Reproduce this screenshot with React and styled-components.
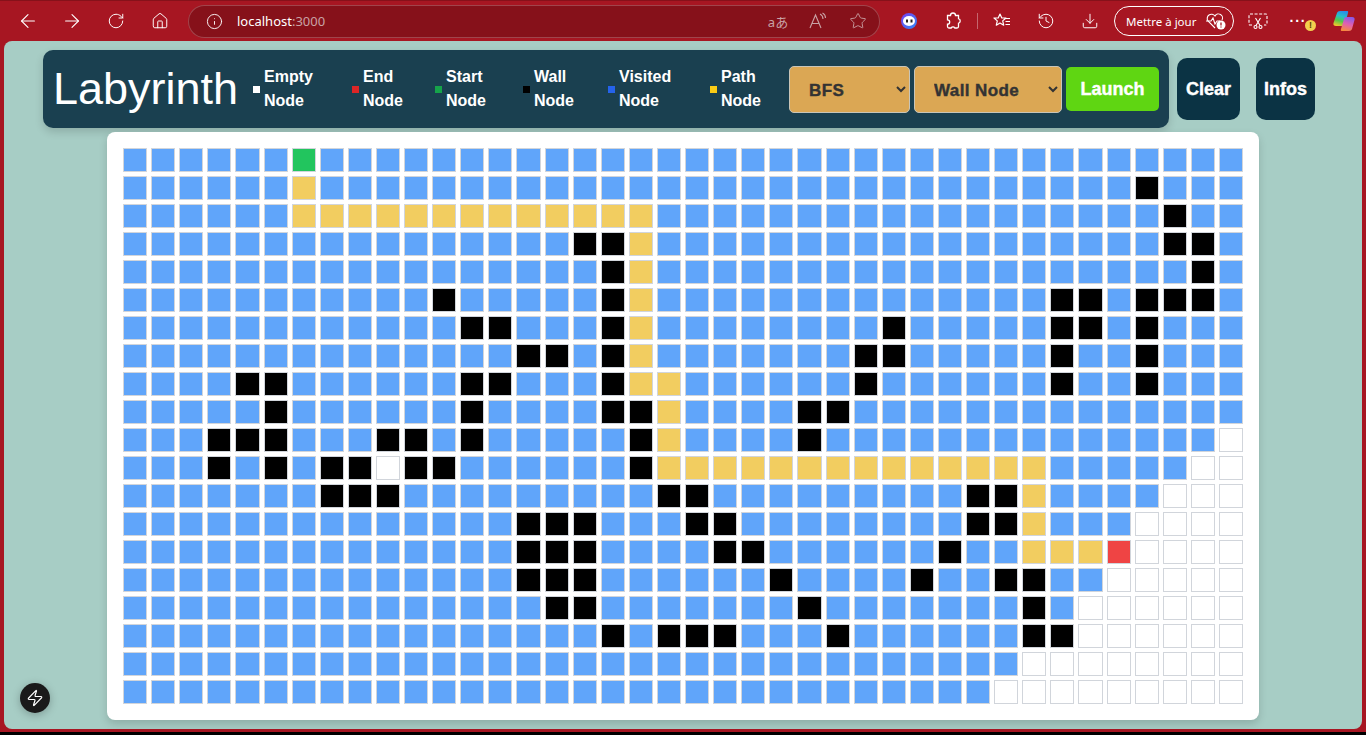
import React from 'react'
import styled, { createGlobalStyle } from 'styled-components'
import {
  ArrowLeft, ArrowRight, RotateCw, Home, Info, Star, History, Download, Zap,
} from 'lucide-react'

const GlobalStyle = createGlobalStyle`
  html, body { margin: 0; padding: 0; height: 100%; overflow: hidden; background: #000; }
  * { box-sizing: border-box; }
`

const Window = styled.div`
  height: 732px;
  display: flex;
  flex-direction: column;
  background: #a71622;
`

const Chrome = styled.div`
  height: 41px;
  flex-shrink: 0;
  display: flex;
  align-items: center;
  padding-left: 6px;
  border-top: 1px solid #86111a;
  color: #fff;
`

const IconBtn = styled.div`
  width: ${p => p.$width || 44}px;
  height: 32px;
  flex-shrink: 0;
  display: flex;
  align-items: center;
  justify-content: center;
  position: relative;
  color: ${p => p.$dim ? '#c9a2a5' : '#fff'};
`

const AddressBar = styled.div`
  width: 692px;
  height: 33px;
  margin: 0 7px 0 6px;
  flex-shrink: 0;
  display: flex;
  align-items: center;
  padding: 0 1px 0 3px;
  border-radius: 17px;
  background: #86111a;
  border: 1px solid rgba(255, 255, 255, .22);
`

const Url = styled.div`
  flex: 1;
  margin-left: 1px;
  font: 13px "Noto Sans", sans-serif;
  color: #fff;

  span { color: #c9a2a5; }
`

const Translate = styled.span`
  font: 13px "Noto Sans", "Noto Sans CJK JP", sans-serif;
`

const AddressIcons = styled.div`
  display: flex;
`

const Separator = styled.div`
  width: 1px;
  height: 16px;
  margin: 0 2px;
  flex-shrink: 0;
  background: rgba(255, 255, 255, .35);
`

const UpdateBtn = styled.div`
  width: 120px;
  height: 30px;
  margin: 0 2px;
  flex-shrink: 0;
  display: flex;
  align-items: center;
  gap: 9px;
  padding-left: 11px;
  border: 1px solid #fff;
  border-radius: 15px;
  font: 11.5px "Noto Sans", sans-serif;
  white-space: nowrap;
`

const Dots = styled.span`
  margin-right: 6px;
  font: 700 14px "Liberation Sans", sans-serif;
  letter-spacing: 1px;
`

const Warning = styled.div`
  position: absolute;
  left: 25px;
  top: 15px;
  width: 11px;
  height: 11px;
  border-radius: 50%;
  background: #f3d04e;
  color: #5a4300;
  font: bold 9px/11px "Liberation Sans", sans-serif;
  text-align: center;
`

const Page = styled.main`
  flex: 1;
  margin: 0 4px 3px;
  padding-top: 9px;
  border-radius: 8px;
  background: #a7cdc5;
  display: flex;
  flex-direction: column;
  position: relative;
`

const TopRow = styled.div`
  display: flex;
  align-items: center;
  margin-left: 39px;
`

const Header = styled.header`
  width: 1126px;
  height: 78px;
  display: flex;
  align-items: center;
  padding-left: 10px;
  border-radius: 10px;
  background: #1a4050;
  box-shadow: 0 4px 8px rgba(0, 0, 0, .15);
`

const Title = styled.h1`
  width: 200px;
  margin: 0;
  font: 400 45px "Liberation Sans", Arial, sans-serif;
  color: #fff;
`

const Legend = styled.div`
  display: grid;
  grid-template-columns: 99px 83px 88px 85px 102px 79px;
`

const LegendItem = styled.div`
  display: flex;
  align-items: center;
  gap: 4px;
`

const Swatch = styled.span`
  width: 7px;
  height: 7px;
  flex-shrink: 0;
  background: ${p => p.$color};
`

const LegendLabel = styled.div`
  font: 700 16px/24px "Liberation Sans", Arial, sans-serif;
  color: #fff;
`

const Select = styled.select`
  height: 47px;
  margin-right: 4px;
  padding: 2px 0 0 15px;
  border: 1px solid #c9c5b8;
  border-radius: 5px;
  background: #dba754;
  color: #333;
  font: 700 17px "Liberation Sans", Arial, sans-serif;
  letter-spacing: .4px;
  -webkit-text-stroke: .4px #333;
  width: ${p => p.$width}px;
`

const Launch = styled.button`
  width: 93px;
  height: 44px;
  border: 0;
  padding: 0;
  border-radius: 5px;
  background: #5fd612;
  color: #fff;
  font: 700 18px "Liberation Sans", Arial, sans-serif;
  -webkit-text-stroke: .4px #fff;
`

const SideButton = styled.button`
  width: ${p => p.$width}px;
  height: 62px;
  margin-left: ${p => p.$gap}px;
  border: 0;
  padding: 0;
  border-radius: 10px;
  background: #0b3344;
  color: #fff;
  font: 700 18px "Liberation Sans", Arial, sans-serif;
  -webkit-text-stroke: .4px #fff;
`

const Board = styled.section`
  width: 1152px;
  margin: 4px auto 0;
  padding: 16px;
  border-radius: 8px;
  background: #fff;
  box-shadow: 0 4px 8px rgba(0, 0, 0, .15);
  display: grid;
  grid-template-columns: repeat(40, 1fr);
  grid-auto-rows: 24px;
  gap: 4px;
`

const cellColors = {
  empty: '#fff',
  visited: '#60a5fa',
  wall: '#000',
  path: '#f2cd60',
  start: '#22c55e',
  end: '#ef4444',
}

const Cell = styled.div`
  border: 1px solid #d1d5db;
  background: ${p => cellColors[p.$kind]};
`

const DevBadge = styled.div`
  position: absolute;
  left: 16px;
  bottom: 16px;
  width: 30px;
  height: 30px;
  border-radius: 50%;
  background: #1a1a1a;
  color: #fff;
  display: flex;
  align-items: center;
  justify-content: center;
  box-shadow: 0 2px 8px rgba(0, 0, 0, .25);
`

// walls, path cells and the last blue column of every row
const rows = [
  { w: [], p: [], last: 39 },
  { w: [36], p: [6], last: 39 },
  { w: [37], p: [6, 7, 8, 9, 10, 11, 12, 13, 14, 15, 16, 17, 18], last: 39 },
  { w: [16, 17, 37, 38], p: [18], last: 39 },
  { w: [17, 38], p: [18], last: 39 },
  { w: [11, 17, 33, 34, 36, 37, 38], p: [18], last: 39 },
  { w: [12, 13, 17, 27, 33, 34, 36], p: [18], last: 39 },
  { w: [14, 15, 17, 26, 27, 33, 36], p: [18], last: 39 },
  { w: [4, 5, 12, 13, 17, 26, 33, 36], p: [18, 19], last: 39 },
  { w: [5, 12, 17, 18, 24, 25], p: [19], last: 39 },
  { w: [3, 4, 5, 9, 10, 12, 18, 24], p: [19], last: 38 },
  { w: [3, 5, 7, 8, 10, 11, 18], p: [19, 20, 21, 22, 23, 24, 25, 26, 27, 28, 29, 30, 31, 32], last: 37, holes: [9] },
  { w: [7, 8, 9, 19, 20, 30, 31], p: [32], last: 36 },
  { w: [14, 15, 16, 20, 21, 30, 31], p: [32], last: 35 },
  { w: [14, 15, 16, 21, 22, 29], p: [32, 33, 34], last: 35 },
  { w: [14, 15, 16, 23, 28, 31, 32], p: [], last: 34 },
  { w: [15, 16, 24, 32], p: [], last: 33 },
  { w: [17, 19, 20, 21, 25, 32, 33], p: [], last: 33 },
  { w: [], p: [], last: 31 },
  { w: [], p: [], last: 30 },
]

const kindOf = (r, c) => {
  const row = rows[r]
  if (r === 0 && c === 6) return 'start'
  if (r === 14 && c === 35) return 'end'
  if (row.w.includes(c)) return 'wall'
  if (row.p.includes(c)) return 'path'
  if (row.holes && row.holes.includes(c)) return 'empty'
  return c <= row.last ? 'visited' : 'empty'
}

const legend = [
  ['#fff', 'Empty'],
  ['#dc2626', 'End'],
  ['#16a34a', 'Start'],
  ['#000', 'Wall'],
  ['#2563eb', 'Visited'],
  ['#facc15', 'Path'],
]

const ExtensionFace = () => (
  <svg width="18" height="18" viewBox="0 0 18 18">
    <defs>
      <linearGradient id="face" x1="0" y1="0" x2="1" y2="1">
        <stop offset="0" stopColor="#7a3df0" />
        <stop offset="1" stopColor="#2f8bf5" />
      </linearGradient>
    </defs>
    <circle cx="9" cy="9" r="8" fill="url(#face)" />
    <ellipse cx="9" cy="9" rx="6" ry="5" fill="#fff" />
    <rect x="6" y="7.5" width="2" height="3" fill="#222" />
    <rect x="10.5" y="7.5" width="2" height="3" fill="#222" />
  </svg>
)

const PuzzleIcon = () => (
  <svg width="18" height="18" viewBox="0 0 18 18" fill="none" stroke="currentColor" strokeWidth="1.3">
    <path d="M6.500 3.500a2.500 2.500 0 0 1 5 0h3v3.200a2.400 2.400 0 0 1 0 4.600v3.200a1.500 1.500 0 0 1-1.500 1.500h-2.200a2 2 0 0 0-3.600 0H5a1.500 1.500 0 0 1-1.500-1.500v-2.300a2.200 2.200 0 0 0 0-4.400V3.500z" />
  </svg>
)

const FavoritesIcon = () => (
  <svg width="18" height="18" viewBox="0 0 18 18" fill="none" stroke="currentColor" strokeWidth="1.2">
    <path d="M7 2l1.800 4h4.200l-3.300 2.900 1 4.300L7 11l-3.700 2.200 1-4.300L1 6h4.200z" strokeLinejoin="round" />
    <path d="M12.500 6.500h4.500M12.500 9.500h4.500M12.500 12.500h4.500" />
  </svg>
)

const ReadIcon = () => (
  <svg width="20" height="18" viewBox="0 0 20 18" fill="none" stroke="currentColor" strokeWidth="1.1">
    <path d="M2 16L7.500 3 13 16M4 11.500h7" />
    <path d="M12 2c2 1 3 2.500 3 5M14.500 1c2 1 3 3 3 5" />
  </svg>
)

const HeartIcon = () => (
  <svg width="22" height="20" viewBox="0 0 22 20" fill="none" stroke="currentColor" strokeWidth="1.1">
    <path d="M10 17L3 10a4 4 0 0 1 7-5 4 4 0 0 1 7 4" />
    <path d="M1 10h5l2-3 2 6 2-3h3" />
    <circle cx="16" cy="14" r="4.500" fill="#fff" stroke="none" />
    <path d="M16 11.500v3M16 15.500v1" stroke="#a71622" strokeWidth="1.300" />
  </svg>
)

const ScreenshotIcon = () => (
  <svg width="20" height="18" viewBox="0 0 20 18" fill="none" stroke="currentColor" strokeWidth="1.1">
    <path d="M4 13H2a1 1 0 0 1-1-1V3a1 1 0 0 1 1-1h16a1 1 0 0 1 1 1v9a1 1 0 0 1-1 1h-2" strokeDasharray="3 1.600" />
    <circle cx="7.500" cy="15" r="1.500" />
    <circle cx="12.500" cy="15" r="1.500" />
    <path d="M8 13.500L12.500 6M12 13.500L7.500 6" />
  </svg>
)

const CopilotLogo = () => (
  <svg width="24" height="24" viewBox="0 0 24 24">
    <defs>
      <linearGradient id="cpA" x1=".6" y1="0" x2=".3" y2="1">
        <stop offset="0" stopColor="#2a8fe8" />
        <stop offset=".35" stopColor="#27c0c8" />
        <stop offset=".65" stopColor="#55c845" />
        <stop offset="1" stopColor="#f2c52e" />
      </linearGradient>
      <linearGradient id="cpB" x1=".6" y1="0" x2=".3" y2="1">
        <stop offset="0" stopColor="#8a5ae8" />
        <stop offset=".5" stopColor="#e060b0" />
        <stop offset="1" stopColor="#f78a3c" />
      </linearGradient>
    </defs>
    <path d="M8 2h7c1 0 1.500.5 1 2l-3 11c-.5 1.500-1.500 2-3 2H4c-2 0-3-1-2.500-3L5 4c.4-1.300 1.500-2 3-2z" fill="url(#cpA)" />
    <path d="M14 8h6c2 0 3 1 2.500 3L20 20c-.4 1.300-1.500 2-3 2h-7c-1 0-1.500-.5-1-2l3-10c.4-1.300 1-2 2-2z" fill="url(#cpB)" />
  </svg>
)

export default function App () {
  return (
    <>
      <GlobalStyle />
      <Window>
        <Chrome>
          <IconBtn><ArrowLeft size={22} strokeWidth={1.2} /></IconBtn>
          <IconBtn><ArrowRight size={22} strokeWidth={1.2} /></IconBtn>
          <IconBtn><RotateCw size={18} strokeWidth={1.3} /></IconBtn>
          <IconBtn><Home size={18} strokeWidth={1.3} /></IconBtn>
          <AddressBar>
            <IconBtn><Info size={17} strokeWidth={1.3} /></IconBtn>
            <Url>localhost<span>:3000</span></Url>
            <AddressIcons>
              <IconBtn $dim $width={40}><Translate>aあ</Translate></IconBtn>
              <IconBtn $dim $width={40}><ReadIcon /></IconBtn>
              <IconBtn $dim $width={40}><Star size={18} strokeWidth={1.2} /></IconBtn>
            </AddressIcons>
          </AddressBar>
          <IconBtn><ExtensionFace /></IconBtn>
          <IconBtn><PuzzleIcon /></IconBtn>
          <Separator />
          <IconBtn><FavoritesIcon /></IconBtn>
          <IconBtn><History size={18} strokeWidth={1.3} /></IconBtn>
          <IconBtn><Download size={18} strokeWidth={1.3} /></IconBtn>
          <UpdateBtn>Mettre à jour <HeartIcon /></UpdateBtn>
          <IconBtn><ScreenshotIcon /></IconBtn>
          <IconBtn $width={42}><Dots>···</Dots><Warning>!</Warning></IconBtn>
          <IconBtn><CopilotLogo /></IconBtn>
        </Chrome>
        <Page>
          <TopRow>
            <Header>
              <Title>Labyrinth</Title>
              <Legend>
                {legend.map(([color, name]) =>
                  <LegendItem key={name}>
                    <Swatch $color={color} />
                    <LegendLabel>{name}<br />Node</LegendLabel>
                  </LegendItem>
                )}
              </Legend>
              <Select $width={121} defaultValue='BFS'>
                <option>BFS</option>
                <option>DFS</option>
              </Select>
              <Select $width={148} defaultValue='Wall Node'>
                <option>Wall Node</option>
                <option>Start Node</option>
                <option>End Node</option>
              </Select>
              <Launch>Launch</Launch>
            </Header>
            <SideButton $width={63} $gap={8}>Clear</SideButton>
            <SideButton $width={59} $gap={16}>Infos</SideButton>
          </TopRow>
          <Board>
            {rows.map((row, r) =>
              Array.from({ length: 40 }, (_, c) =>
                <Cell key={r + '-' + c} $kind={kindOf(r, c)} />
              )
            )}
          </Board>
          <DevBadge><Zap size={18} strokeWidth={1.6} /></DevBadge>
        </Page>
      </Window>
    </>
  )
}
